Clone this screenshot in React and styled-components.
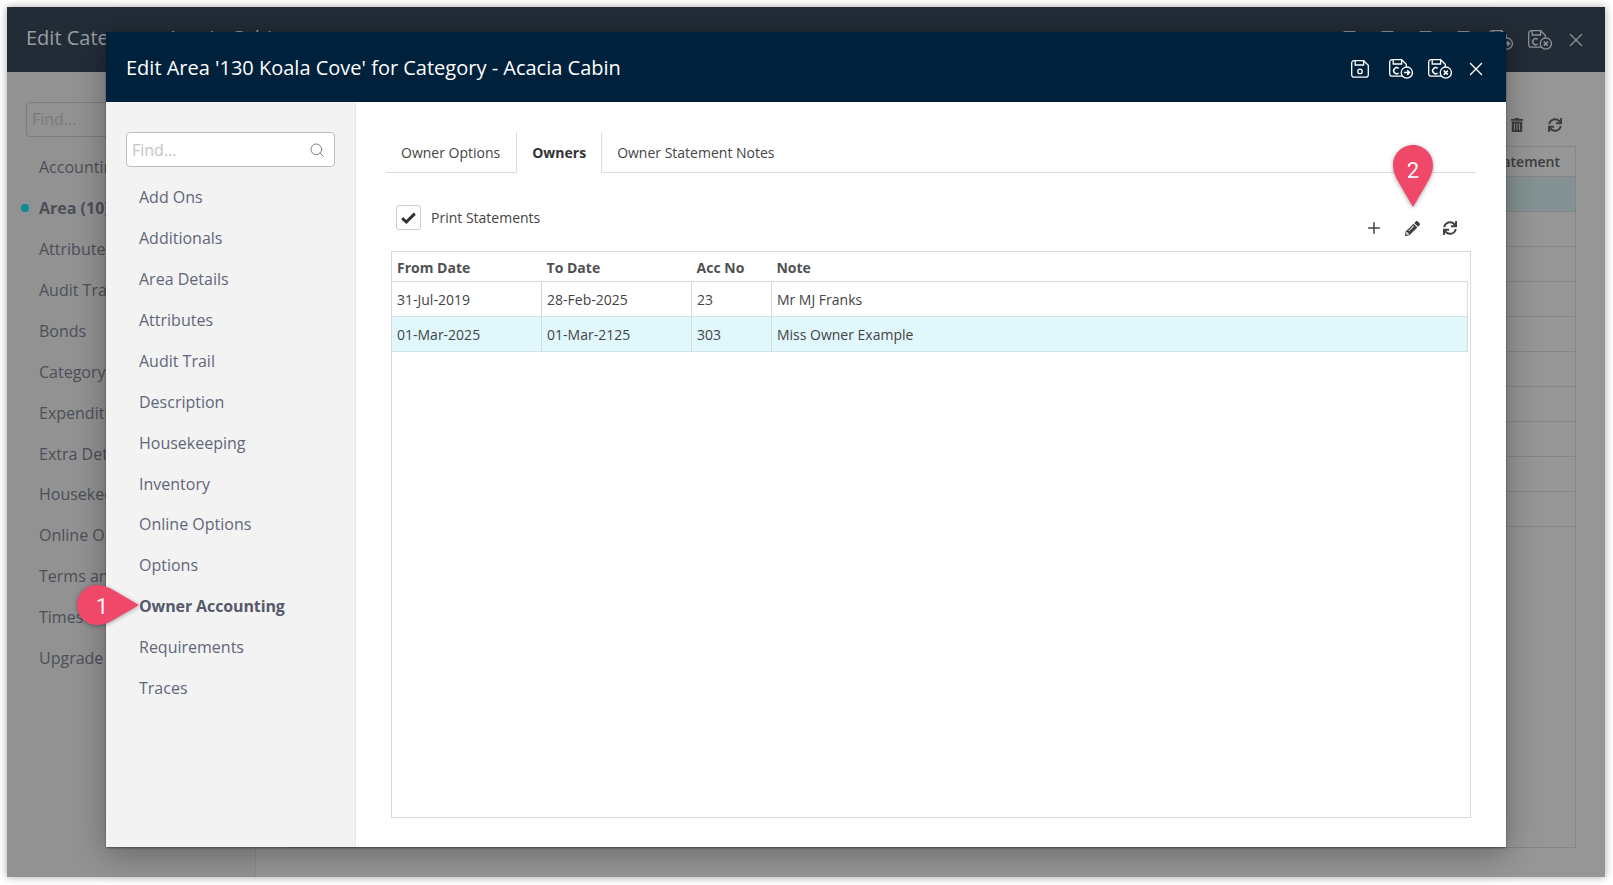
import React from 'react';
import styled, { createGlobalStyle } from 'styled-components';
import { FaPencilAlt, FaSync, FaTrashAlt } from 'react-icons/fa';
import { Plus, Search, X } from 'lucide-react';

const GlobalStyle = createGlobalStyle`
  html, body {
    margin: 0;
    height: 100%;
    background: #fff;
    overflow: hidden;
    font-family: "Open Sans", "Liberation Sans", sans-serif;
  }
  * { box-sizing: border-box; }
`;

const MODAL_NAV = ['Add Ons', 'Additionals', 'Area Details', 'Attributes', 'Audit Trail', 'Description', 'Housekeeping', 'Inventory', 'Online Options', 'Options', 'Owner Accounting', 'Requirements', 'Traces'];
const BACK_NAV = ['Accounting', 'Area (10)', 'Attributes', 'Audit Trail', 'Bonds', 'Category', 'Expenditure', 'Extra Details', 'Housekeeping', 'Online Options', 'Terms and', 'Times', 'Upgrade'];
const OWNERS = [
  { from: '31-Jul-2019', to: '28-Feb-2025', acc: '23', note: 'Mr MJ Franks' },
  { from: '01-Mar-2025', to: '01-Mar-2125', acc: '303', note: 'Miss Owner Example', selected: true },
];

function SaveIcon({ color = '#fff' }) {
  return (
    <svg width="18" height="18" viewBox="0 0 18 18" fill="none" stroke={color} strokeWidth="1.3">
      <path d="M3 .7H12.6L17.3 5.2V14.8a2.3 2.3 0 0 1-2.3 2.4H3A2.3 2.3 0 0 1 .7 14.8V3A2.3 2.3 0 0 1 3 .7Z" />
      <path d="M4.2 .7V5H12.6V.7" />
      <circle cx="9" cy="11.4" r="2.2" />
    </svg>
  );
}

function SaveBadgeIcon({ color = '#fff', fill = '#00213b', cancel }) {
  return (
    <svg width="24" height="20" viewBox="0 0 24 20" fill="none" stroke={color} strokeWidth="1.3">
      <path d="M3 .7H12.6L17.3 5.2V14.8a2.3 2.3 0 0 1-2.3 2.4H3A2.3 2.3 0 0 1 .7 14.8V3A2.3 2.3 0 0 1 3 .7Z" />
      <path d="M4.2 .7V5H12.6V.7" />
      <path d="M9.6 9.4a3 3 0 1 0 0 4.6" strokeWidth="1.5" />
      <circle cx="17.8" cy="13.6" r="5.6" fill={fill} />
      {cancel
        ? <path d="M15.8 11.6l4 4M19.8 11.6l-4 4" strokeWidth="1.5" />
        : <path d="M15 13.6h5.4M18.2 11.3l2.3 2.3-2.3 2.3" strokeWidth="1.5" />}
    </svg>
  );
}

function Pin({ number, sideways, className }) {
  return (
    <PinWrap className={className} $sideways={sideways}>
      <svg width="40" height="62" viewBox="0 0 40 62">
        <path d="M20 0C31 0 40 9 40 20C40 27 37 33 34 38L20 62L6 38C3 33 0 27 0 20C0 9 9 0 20 0Z" fill="#ef4868" />
      </svg>
      <PinNumber $sideways={sideways}>{number}</PinNumber>
    </PinWrap>
  );
}

export default function App() {
  return (
    <>
      <GlobalStyle />
      <Window>
        <BackHeader>
          <BackTitle>Edit Category - Acacia Cabin</BackTitle>
          <IconRow>
            <SaveSlot><SaveIcon color="#8d9196" /></SaveSlot>
            <SaveSlot><SaveIcon color="#8d9196" /></SaveSlot>
            <SaveSlot><SaveIcon color="#8d9196" /></SaveSlot>
            <SaveIcon color="#8d9196" />
            <SaveBadgeIcon color="#8d9196" fill="#222c37" />
            <SaveBadgeIcon color="#8d9196" fill="#222c37" cancel />
            <CloseSlot><X size={22} strokeWidth={1.4} color="#8d9196" /></CloseSlot>
          </IconRow>
        </BackHeader>
        <BackBody>
          <BackSidebar>
            <BackSearch>Find...</BackSearch>
            {BACK_NAV.map((name) => (
              <BackNavItem key={name} $active={name.startsWith('Area')}>{name}</BackNavItem>
            ))}
          </BackSidebar>
          <BackMain>
            <BackToolbar>
              <FaTrashAlt size={14} />
              <FaSync size={14} />
            </BackToolbar>
            <BackTable>
              <BackHeadCell>Statement</BackHeadCell>
              <BackRow $selected />
              {Array.from({ length: 9 }, (_, i) => <BackRow key={i} />)}
            </BackTable>
          </BackMain>
        </BackBody>

        <Modal>
          <ModalHeader>
            <ModalTitle>Edit Area '130 Koala Cove' for Category - Acacia Cabin</ModalTitle>
            <HeaderActions>
              <SaveSlot><SaveIcon /></SaveSlot>
              <SaveBadgeIcon />
              <SaveBadgeIcon cancel />
              <CloseSlot><X size={22} strokeWidth={1.5} color="#fff" /></CloseSlot>
            </HeaderActions>
          </ModalHeader>
          <ModalBody>
            <Sidebar>
              <SearchBox>
                <SearchText>Find...</SearchText>
                <Search size={16} strokeWidth={1.4} color="#777" />
              </SearchBox>
              <NavList>
                {MODAL_NAV.map((name) => (
                  <NavItem key={name} $active={name === 'Owner Accounting'}>{name}</NavItem>
                ))}
              </NavList>
            </Sidebar>
            <Main>
              <Tabs>
                <Tab>Owner Options</Tab>
                <Tab $active>Owners</Tab>
                <Tab>Owner Statement Notes</Tab>
              </Tabs>
              <Panel>
                <OptionsRow>
                  <CheckRow>
                    <CheckBox>
                      <svg width="15" height="12" viewBox="0 0 15 12" fill="none" stroke="#333" strokeWidth="3">
                        <path d="M1.2 6.2L5.3 10L13.8 1.6" />
                      </svg>
                    </CheckBox>
                    <span>Print Statements</span>
                  </CheckRow>
                  <Toolbar>
                    <ToolButton><Plus size={18} strokeWidth={2} /></ToolButton>
                    <ToolButton><FaPencilAlt size={15} /></ToolButton>
                    <ToolButton><FaSync size={14} /></ToolButton>
                  </Toolbar>
                </OptionsRow>
                <TableBox>
                  <OwnersTable>
                    <thead>
                      <tr>
                        <HeadCell $w={149.6}>From Date</HeadCell>
                        <HeadCell $w={150}>To Date</HeadCell>
                        <HeadCell $w={79.8}>Acc No</HeadCell>
                        <HeadCell>Note</HeadCell>
                      </tr>
                    </thead>
                    <tbody>
                      {OWNERS.map((row) => (
                        <BodyRow key={row.acc} $selected={row.selected}>
                          <Cell>{row.from}</Cell>
                          <Cell>{row.to}</Cell>
                          <Cell>{row.acc}</Cell>
                          <Cell>{row.note}</Cell>
                        </BodyRow>
                      ))}
                    </tbody>
                  </OwnersTable>
                </TableBox>
              </Panel>
            </Main>
          </ModalBody>
        </Modal>

        <PinOne number="1" sideways />
        <PinTwo number="2" />
      </Window>
    </>
  );
}

const Window = styled.div`
  position: absolute;
  left: 7px;
  top: 7px;
  width: 1598px;
  height: 870px;
  display: flex;
  flex-direction: column;
  background: #969696;
  box-shadow: 0 0 8px rgba(0, 0, 0, 0.35);
`;

const BackHeader = styled.div`
  height: 65px;
  flex: none;
  display: flex;
  align-items: center;
  justify-content: space-between;
  padding: 0 18px 0 19px;
  background: #222c37;
`;

const BackTitle = styled.div`
  font-size: 20px;
  color: #9a9ea3;
  margin-bottom: 4px;
`;

const IconRow = styled.div`
  display: flex;
  align-items: center;
  gap: 15px;
`;

const SaveSlot = styled.div`
  display: flex;
  margin-right: 5px;
`;

const CloseSlot = styled.div`
  display: flex;
  margin-left: -2px;
`;

const BackBody = styled.div`
  flex: 1;
  display: flex;
  min-height: 0;
`;

const BackSidebar = styled.div`
  width: 249px;
  flex: none;
  padding: 30px 19px 0;
  background: #929292;
  border-right: 1px solid #8a8a8a;
  overflow: hidden;
`;

const BackSearch = styled.div`
  height: 35px;
  line-height: 33px;
  padding-left: 5px;
  border: 1px solid #7c7c7c;
  border-radius: 4px;
  font-size: 16px;
  color: #7a7a7a;
  margin-bottom: 10.3px;
`;

const BackNavItem = styled.div`
  position: relative;
  height: 40.9px;
  line-height: 40.9px;
  padding-left: 13px;
  font-size: 16px;
  white-space: nowrap;
  color: #4c4f59;
  font-weight: ${(p) => (p.$active ? 700 : 400)};

  ${(p) => p.$active && `
    &::before {
      content: '';
      position: absolute;
      left: -5px;
      top: 16px;
      width: 8px;
      height: 8px;
      border-radius: 50%;
      background: #0b8b92;
    }
  `}
`;

const BackMain = styled.div`
  flex: 1;
  display: flex;
  flex-direction: column;
  align-items: flex-end;
  padding: 0 29px 29px 30px;
`;

const BackToolbar = styled.div`
  height: 74px;
  flex: none;
  display: flex;
  align-items: center;
  gap: 24px;
  padding: 32px 14px 0 0;
  color: #3c3c3c;
`;

const BackTable = styled.div`
  flex: 1;
  width: 100%;
  display: flex;
  flex-direction: column;
  border: 1px solid #858585;
`;

const BackHeadCell = styled.div`
  height: 30px;
  line-height: 30px;
  flex: none;
  padding-right: 15px;
  text-align: right;
  font-size: 14px;
  font-weight: 600;
  color: #3d3d3d;
  border-bottom: 1px solid #858585;
`;

const BackRow = styled.div`
  height: 35px;
  flex: none;
  border-bottom: 1px solid #858585;
  background: ${(p) => (p.$selected ? '#859293' : 'transparent')};
`;

const Modal = styled.div`
  position: absolute;
  left: 99px;
  top: 25px;
  width: 1400px;
  height: 815px;
  display: flex;
  flex-direction: column;
  background: #fff;
  box-shadow: 0 6px 30px rgba(0, 0, 0, 0.32), 0 1px 2px rgba(0, 0, 0, 0.4);
`;

const ModalHeader = styled.div`
  height: 70px;
  flex: none;
  display: flex;
  align-items: center;
  justify-content: space-between;
  padding: 0 19px 0 20px;
  background: #00213b;
`;

const ModalTitle = styled.div`
  font-size: 20px;
  color: #fff;
`;

const HeaderActions = styled(IconRow)`
  margin-top: 3px;
  color: #fff;
`;

const ModalBody = styled.div`
  flex: 1;
  display: flex;
  min-height: 0;
`;

const Sidebar = styled.div`
  width: 250px;
  flex: none;
  padding: 30px 20px 0 20px;
  background: #f3f3f3;
  border-right: 1px solid #e8e8e8;
`;

const SearchBox = styled.div`
  height: 35px;
  display: flex;
  align-items: center;
  justify-content: space-between;
  padding: 0 9px 0 5px;
  background: #fff;
  border: 1px solid #bdbdbd;
  border-radius: 4px;
`;

const SearchText = styled.span`
  font-size: 16px;
  color: #c4c4c4;
`;

const NavList = styled.div`
  margin-top: 10.3px;
`;

const NavItem = styled.div`
  height: 40.9px;
  line-height: 40.9px;
  padding-left: 13px;
  font-size: 16px;
  color: ${(p) => (p.$active ? '#555a6b' : '#62667a')};
  font-weight: ${(p) => (p.$active ? 700 : 400)};
  letter-spacing: ${(p) => (p.$active ? '-0.12px' : 'normal')};
`;

const Main = styled.div`
  flex: 1;
  min-width: 0;
  display: flex;
  flex-direction: column;
  padding: 30px 30px 29px 30px;
`;

const Tabs = styled.div`
  height: 41px;
  flex: none;
  display: flex;
  border-bottom: 1px solid #ddd;
`;

const Tab = styled.div`
  height: ${(p) => (p.$active ? 41 : 40)}px;
  padding: 0 15px;
  line-height: 41px;
  font-size: 14px;
  font-weight: ${(p) => (p.$active ? 700 : 400)};
  color: ${(p) => (p.$active ? '#333' : '#444')};
  ${(p) => p.$active && `
    margin-left: 1px;
    background: #fff;
    border: 1px solid #ddd;
    border-width: 0 1px;
  `}
`;

const Panel = styled.div`
  flex: 1;
  min-height: 0;
  display: flex;
  flex-direction: column;
  padding: 0 5px;
`;

const OptionsRow = styled.div`
  height: 78px;
  flex: none;
  display: flex;
  justify-content: space-between;
`;

const CheckRow = styled.div`
  display: flex;
  align-items: center;
  align-self: flex-start;
  gap: 10px;
  margin: 32px 0 0 5px;
  font-size: 14px;
  color: #444;
`;

const CheckBox = styled.div`
  width: 25px;
  height: 25px;
  display: flex;
  align-items: center;
  justify-content: center;
  border: 1px solid #ccc;
  border-radius: 3px;
`;

const Toolbar = styled.div`
  display: flex;
  align-items: center;
  align-self: flex-start;
  height: 20px;
  margin-top: 45px;
  padding-right: 2px;
`;

const ToolButton = styled.div`
  width: 38px;
  display: flex;
  justify-content: center;
  color: #404040;
`;

const TableBox = styled.div`
  flex: 1;
  min-height: 0;
  border: 1px solid #d9d9d9;
`;

const OwnersTable = styled.table`
  width: 1076px;
  border-collapse: collapse;
  table-layout: fixed;
  font-size: 14px;
`;

const HeadCell = styled.th`
  width: ${(p) => (p.$w ? `${p.$w}px` : 'auto')};
  height: 29px;
  padding: 2px 5px 0;
  text-align: left;
  font-weight: 700;
  color: #505050;
  border-bottom: 1px solid #d9d9d9;
`;

const BodyRow = styled.tr`
  background: ${(p) => (p.$selected ? '#e0f7fc' : '#fff')};
`;

const Cell = styled.td`
  height: 35px;
  padding: 1px 5px 0;
  color: #444;
  border-right: 1px solid #d9d9d9;
  border-bottom: 1px solid #d5e3e7;
`;

const PinWrap = styled.div`
  position: absolute;
  width: ${(p) => (p.$sideways ? 62 : 40)}px;
  height: ${(p) => (p.$sideways ? 40 : 62)}px;
  filter: drop-shadow(0 1px 2px rgba(0, 0, 0, 0.35));

  svg {
    display: block;
    ${(p) => p.$sideways && 'transform: translate(11px, -11px) rotate(-90deg);'}
  }
`;

const PinNumber = styled.div`
  position: absolute;
  left: ${(p) => (p.$sideways ? 5 : 0)}px;
  top: ${(p) => (p.$sideways ? 1 : 5)}px;
  width: 40px;
  height: 40px;
  display: flex;
  align-items: center;
  justify-content: center;
  font-family: Roboto, "Liberation Sans", sans-serif;
  font-size: 22px;
  color: #fff;
`;

const PinOne = styled(Pin)`
  left: 70px;
  top: 578px;
`;

const PinTwo = styled(Pin)`
  left: 1386px;
  top: 138px;
`;
